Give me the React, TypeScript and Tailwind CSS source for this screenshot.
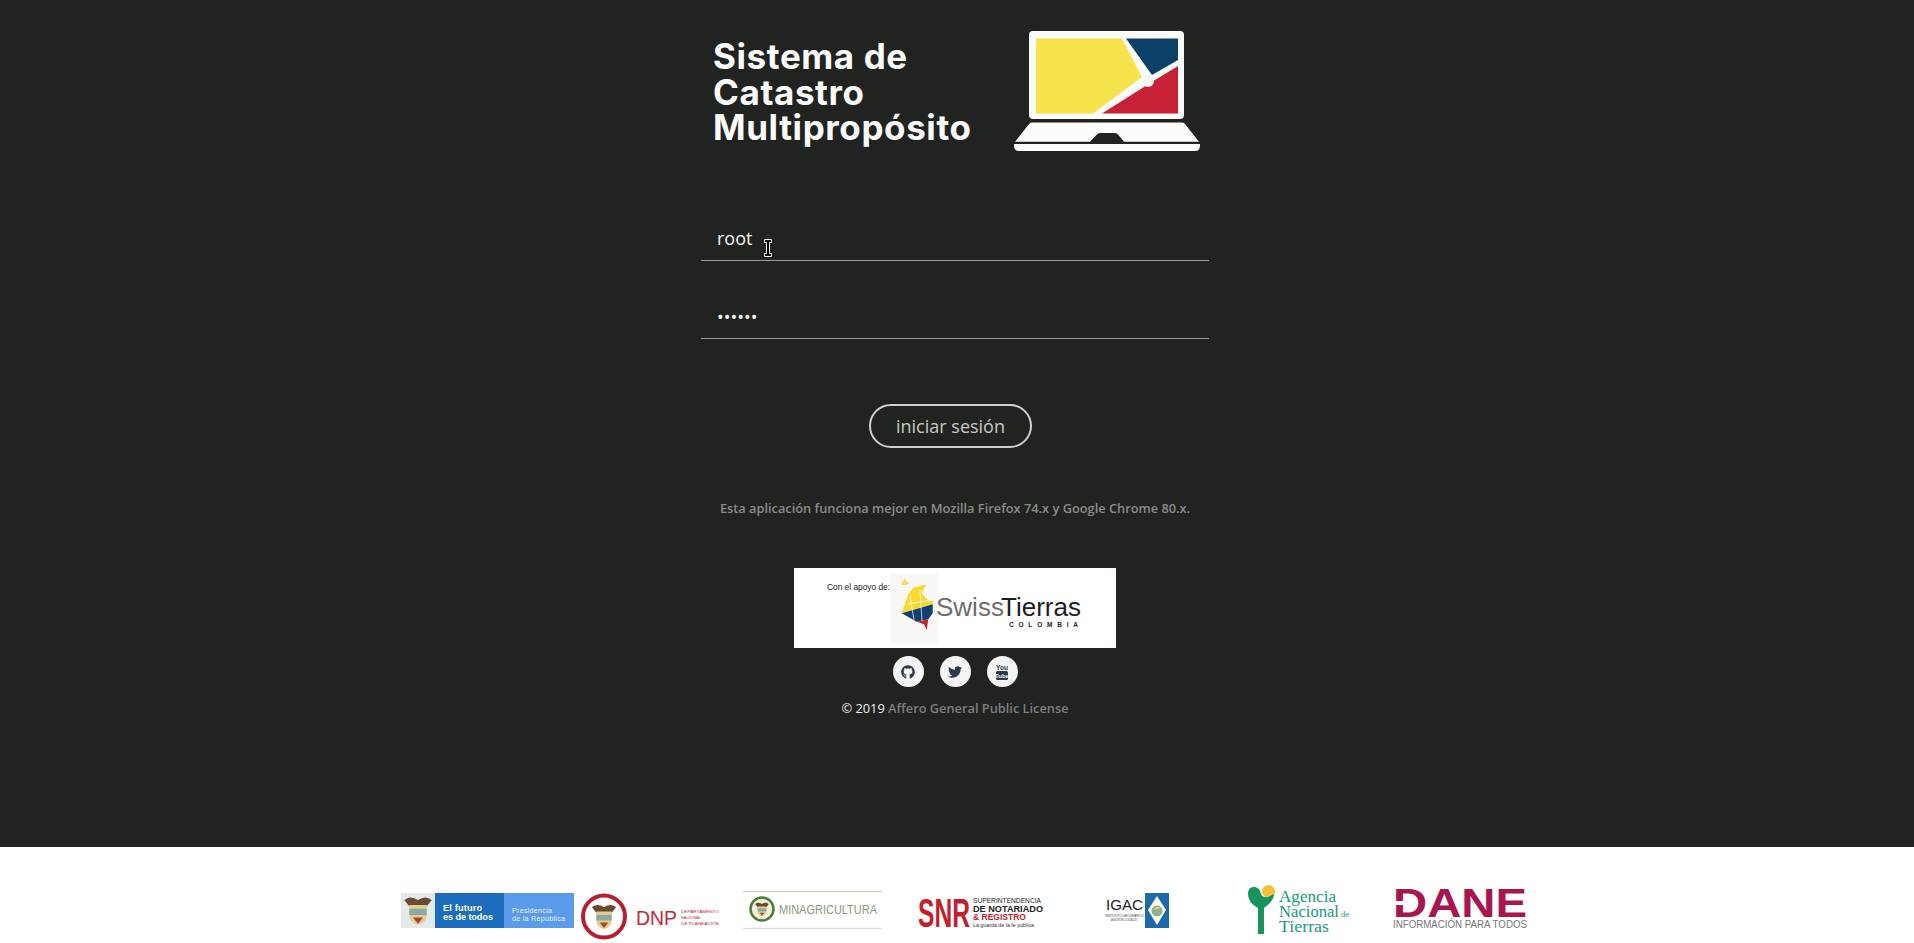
import { FaGithub, FaTwitter } from 'react-icons/fa';

const SANS = "'Liberation Sans', Arial, sans-serif";

function LaptopLogo() {
  return (
    <svg width={186} height={120} viewBox="0 0 186 120">
      <rect x={15} y={0} width={155} height={88} rx={4} fill="#fbfbfa" />
      <polygon points="22,7.5 108,7.5 128,46 79,82.5 22,82.5" fill="#f7e34b" />
      <polygon points="112,7.5 164,7.5 164,29 138,44" fill="#0b4168" />
      <polygon points="164,35 164,82.5 88,82.5 141,49" fill="#c62136" />
      <circle cx={134} cy={50} r={6} fill="#f4f4f2" />
      <path d="M18 91.5 H168 Q170 91.5 171 93 L185 110.7 H110 L104 103.5 Q103 102 101 102 H86 Q84 102 83 103.5 L76 110.7 H1 L15 93 Q16 91.5 18 91.5 Z" fill="#fbfbfa" />
      <path d="M0 113 H186 V115 Q186 120 181 120 H5 Q0 120 0 115 Z" fill="#fbfbfa" />
    </svg>
  );
}

function TextCursor() {
  return (
    <svg className="absolute left-[63px] top-[22px]" width={8} height={18} viewBox="0 0 8 18">
      <path d="M0.5 0.5 H7.5 V3.5 H5.5 V14.5 H7.5 V17.5 H0.5 V14.5 H2.5 V3.5 H0.5 Z" fill="#000" stroke="#fff" strokeWidth={1} />
    </svg>
  );
}

function SocialLink({ children }: { children: React.ReactNode }) {
  return (
    <a className="flex h-[31px] w-[31px] items-center justify-center rounded-full bg-[#f4f4f4] text-[#2c3a4b]">
      {children}
    </a>
  );
}

function YoutubeIcon() {
  return (
    <svg width={14} height={16} viewBox="0 0 14 16">
      <text x={7} y={5.5} textAnchor="middle" fontSize={6.5} fontWeight={700} fontFamily={SANS} fill="#2c3a4b">You</text>
      <rect x={1} y={7} width={12} height={9} rx={1.5} fill="#2c3a4b" />
      <text x={7} y={14.2} textAnchor="middle" fontSize={6} fontWeight={700} fontFamily={SANS} fill="#f4f4f4">Tube</text>
    </svg>
  );
}

function SwissTierras() {
  return (
    <svg width={322} height={80} viewBox="0 0 322 80" className="block bg-white">
      <rect x={96} y={5} width={48} height={71} fill="#faf7f7" />
      <text x={33} y={22} fontSize={9} fontFamily={SANS} fill="#222" textLength={63} lengthAdjust="spacingAndGlyphs">Con el apoyo de:</text>
      <polygon points="108,14 111,10 113,14 116,15 112,17 107,17" fill="#f5de6a" />
      <polygon points="107.7,44.7 114.3,26.3 119.3,19.7 132.7,16.3 127.7,24.7 132.7,31.3 138.7,33 138.7,36.3" fill="#f5d934" />
      <polygon points="107.7,45.3 138.7,36.3 138.7,45.3 134.3,51.3 122.7,53.7" fill="#123f70" />
      <polygon points="122.7,53.7 134.3,51.3 132.7,62 130,56.3" fill="#c8202f" />
      <path d="M116 28 L120 52 M126 22 L128 53 M113 36 L138 32" stroke="#fff" strokeWidth={0.7} fill="none" />
      <text x={142} y={48} fontSize={26} fontFamily={SANS} fill="#6e6e6e">Swiss</text>
      <text x={207} y={48} fontSize={26} fontFamily={SANS} fill="#1d1d1d">Tierras</text>
      <text x={215} y={59} fontSize={6.5} fontWeight={700} fontFamily={SANS} fill="#222" textLength={69}>COLOMBIA</text>
    </svg>
  );
}

function CoatOfArms({ cx, cy, s }: { cx: number; cy: number; s: number }) {
  return (
    <g transform={`translate(${cx} ${cy}) scale(${s})`}>
      <path d="M-11 -8 Q-6 -12 0 -8 Q6 -12 11 -8 L7 -3 L-7 -3 Z" fill="#6a4a32" />
      <path d="M-7 -4 H7 V4 Q7 10 0 12 Q-7 10 -7 4 Z" fill="#e0d08a" />
      <rect x={-7} y={-1} width={14} height={5} fill="#8aa9a8" />
      <path d="M-4 6 H4 L0 11 Z" fill="#a8443a" />
    </g>
  );
}

function FuturoLogo() {
  return (
    <svg width={173} height={35} viewBox="0 0 173 35" className="overflow-visible">
      <rect width={34} height={35} fill="#e4e9ec" />
      <CoatOfArms cx={17} cy={17} s={1.25} />
      <rect x={34} width={69} height={35} fill="#1c6dbd" />
      <rect x={103} width={70} height={35} fill="#5a9bec" />
      <text x={42} y={17.5} fontSize={9.2} fontWeight={700} fontFamily={SANS} fill="#fff" textLength={39}>El futuro</text>
      <text x={42} y={26.5} fontSize={9.2} fontWeight={700} fontFamily={SANS} fill="#fff" textLength={50}>es de todos</text>
      <text x={111} y={20} fontSize={7.2} fontFamily={SANS} fill="#e8f1fd" textLength={40}>Presidencia</text>
      <text x={111} y={27.5} fontSize={7.2} fontFamily={SANS} fill="#e8f1fd" textLength={53}>de la República</text>
    </svg>
  );
}

function DnpLogo() {
  return (
    <svg width={139} height={47} viewBox="0 0 139 47" className="overflow-visible">
      <circle cx={23} cy={23.5} r={21} fill="#fff" stroke="#b5202f" strokeWidth={4} />
      <CoatOfArms cx={23} cy={23} s={1.1} />
      <text x={55} y={32} fontSize={19.5} fontFamily={SANS} fill="#c0283c" textLength={41} lengthAdjust="spacingAndGlyphs">DNP</text>
      <text x={100} y={20} fontSize={4.4} fontFamily={SANS} fill="#c0283c" textLength={38} lengthAdjust="spacingAndGlyphs">DEPARTAMENTO</text>
      <text x={100} y={26} fontSize={4.4} fontFamily={SANS} fill="#c0283c" textLength={20} lengthAdjust="spacingAndGlyphs">NACIONAL</text>
      <text x={100} y={31.5} fontSize={4.4} fontFamily={SANS} fill="#c0283c" textLength={38} lengthAdjust="spacingAndGlyphs">DE PLANEACIÓN</text>
    </svg>
  );
}

function MinagriLogo() {
  return (
    <svg width={139} height={38} viewBox="0 0 139 38" className="overflow-visible">
      <rect y={0} width={139} height={1.2} fill="#cfd4bd" />
      <rect y={36.8} width={139} height={1.2} fill="#d8dcc8" />
      <circle cx={19} cy={18} r={11.5} fill="#f4f2d8" stroke="#4f7d3a" strokeWidth={2.5} />
      <CoatOfArms cx={19} cy={18} s={0.62} />
      <text x={36} y={23} fontSize={12.5} fontFamily={SANS} fill="#8a9a7c" textLength={98} lengthAdjust="spacingAndGlyphs">MINAGRICULTURA</text>
    </svg>
  );
}

function SnrLogo() {
  return (
    <svg width={126} height={35} viewBox="0 0 126 35" className="overflow-visible">
      <text x={0} y={33.5} fontSize={41} fontWeight={700} fontFamily={SANS} fill="#c4202c" textLength={52} lengthAdjust="spacingAndGlyphs">SNR</text>
      <text x={55} y={9.5} fontSize={8} fontFamily={SANS} fill="#222" textLength={68} lengthAdjust="spacingAndGlyphs">SUPERINTENDENCIA</text>
      <text x={55} y={18.5} fontSize={9.5} fontWeight={700} fontFamily={SANS} fill="#222" textLength={70} lengthAdjust="spacingAndGlyphs">DE NOTARIADO</text>
      <text x={55} y={27} fontSize={9.5} fontWeight={700} fontFamily={SANS} fill="#c4202c" textLength={53} lengthAdjust="spacingAndGlyphs">&amp; REGISTRO</text>
      <text x={55} y={33.5} fontSize={6} fontFamily={SANS} fill="#333" textLength={61} lengthAdjust="spacingAndGlyphs">La guarda de la fe pública</text>
    </svg>
  );
}

function IgacLogo() {
  return (
    <svg width={65} height={35} viewBox="0 0 65 35" className="overflow-visible">
      <text x={1} y={17} fontSize={14} fontFamily={SANS} fill="#222" textLength={37} lengthAdjust="spacingAndGlyphs">IGAC</text>
      <text x={0} y={24} fontSize={3.4} fontFamily={SANS} fill="#444" textLength={39} lengthAdjust="spacingAndGlyphs">INSTITUTO GEOGRÁFICO</text>
      <text x={6} y={28} fontSize={3.4} fontFamily={SANS} fill="#444" textLength={26} lengthAdjust="spacingAndGlyphs">AGUSTÍN CODAZZI</text>
      <rect x={40} y={0} width={24} height={35} fill="#1d6aa8" />
      <polygon points="52,3 61,17 52,32 43,17" fill="#fff" />
      <circle cx={52} cy={18} r={5.5} fill="#8fb08a" />
      <path d="M48 17 A5 5 0 0 1 56 15 Z" fill="#e3cf6a" />
    </svg>
  );
}

function AntLogo() {
  return (
    <svg width={107} height={51} viewBox="0 0 107 51" className="overflow-visible">
      <circle cx={22.6} cy={6.5} r={6.5} fill="#f2c230" />
      <path d="M2 9 Q2 1 9 2 Q14 3 15 9 Q17 13 22 12 L28 9 Q28 16 18 23 V49 H12 V23 Q2 18 2 9 Z" fill="#16935f" />
      <g fontFamily="'Liberation Serif', serif" fill="#169a7a" fontSize={17.5}>
        <text x={33} y={16.5} textLength={57} lengthAdjust="spacingAndGlyphs">Agencia</text>
        <text x={33} y={31.5} textLength={60} lengthAdjust="spacingAndGlyphs">Nacional</text>
        <text x={95} y={31.5} fontSize={8.5}>de</text>
        <text x={33} y={46.5} textLength={50} lengthAdjust="spacingAndGlyphs">Tierras</text>
      </g>
    </svg>
  );
}

function DaneLogo() {
  return (
    <svg width={135} height={42} viewBox="0 0 135 42" className="overflow-visible">
      <text x={0} y={28} fontSize={40} fontWeight={700} fontFamily={SANS} fill="#a8154f" textLength={134} lengthAdjust="spacingAndGlyphs">DANE</text>
      <rect x={0} y={12} width={13} height={4} fill="#fff" />
      <text x={0} y={39} fontSize={10} fontFamily={SANS} fill="#777" textLength={134} lengthAdjust="spacingAndGlyphs">INFORMACIÓN PARA TODOS</text>
    </svg>
  );
}

export default function App() {
  return (
    <div className="flex min-h-screen flex-col bg-[#212320] font-['Open_Sans',sans-serif]">
      <main className="h-[847px] pl-[701px]">
        <div className="w-[508px]">
          <div className="flex pl-3 pt-[31px]">
            <h1 className="mt-[8px] w-[301px] font-['Inter',sans-serif] text-[35px] font-bold leading-[35.5px] tracking-[0.6px] text-[#fbfbfb]">
              Sistema de<br />Catastro<br />Multipropósito
            </h1>
            <LaptopLogo />
          </div>

          <div className="relative mt-[66px] h-[44px] border-b border-[#9a9a97]">
            <input readOnly value="root" className="h-full w-full bg-transparent pb-[2px] pl-4 text-[18px] text-[#f3f3f3] outline-none" />
            <TextCursor />
          </div>
          <div className="mt-[34px] h-[44px] border-b border-[#9a9a97]">
            <input readOnly type="password" value="secret" className="h-full w-full bg-transparent pl-4 text-[18px] text-[#f3f3f3] outline-none" />
          </div>

          <div className="mt-[65px] flex pl-[168px]">
            <button className="h-[44px] w-[163px] rounded-full border-2 border-[#d0d0cc] text-[18px] text-[#c9c9c6]">
              iniciar sesión
            </button>
          </div>

          <p className="mt-[51px] text-center text-[12.8px] font-semibold leading-[18px] text-[#8b8c8a]">
            Esta aplicación funciona mejor en Mozilla Firefox 74.x y Google Chrome 80.x.
          </p>

          <div className="mt-[51px] flex justify-center">
            <SwissTierras />
          </div>

          <div className="mt-[8px] flex justify-center gap-[16px]">
            <SocialLink><FaGithub size={14} /></SocialLink>
            <SocialLink><FaTwitter size={14} /></SocialLink>
            <SocialLink><YoutubeIcon /></SocialLink>
          </div>

          <p className="mt-[11px] text-center text-[12.8px] leading-[20px] text-[#f0f0f0]">
            © 2019 <a className="font-semibold text-[#7d7f80]">Affero General Public License</a>
          </p>
        </div>
      </main>

      <footer className="flex h-[96px] items-center bg-white pl-[401px] pt-[30px]">
        <FuturoLogo />
        <div className="ml-[7px] mt-[12px]"><DnpLogo /></div>
        <div className="ml-[23px]"><MinagriLogo /></div>
        <div className="ml-[36px]"><SnrLogo /></div>
        <div className="ml-[61px]"><IgacLogo /></div>
        <div className="ml-[76px]"><AntLogo /></div>
        <div className="ml-[40px]"><DaneLogo /></div>
      </footer>
    </div>
  );
}
